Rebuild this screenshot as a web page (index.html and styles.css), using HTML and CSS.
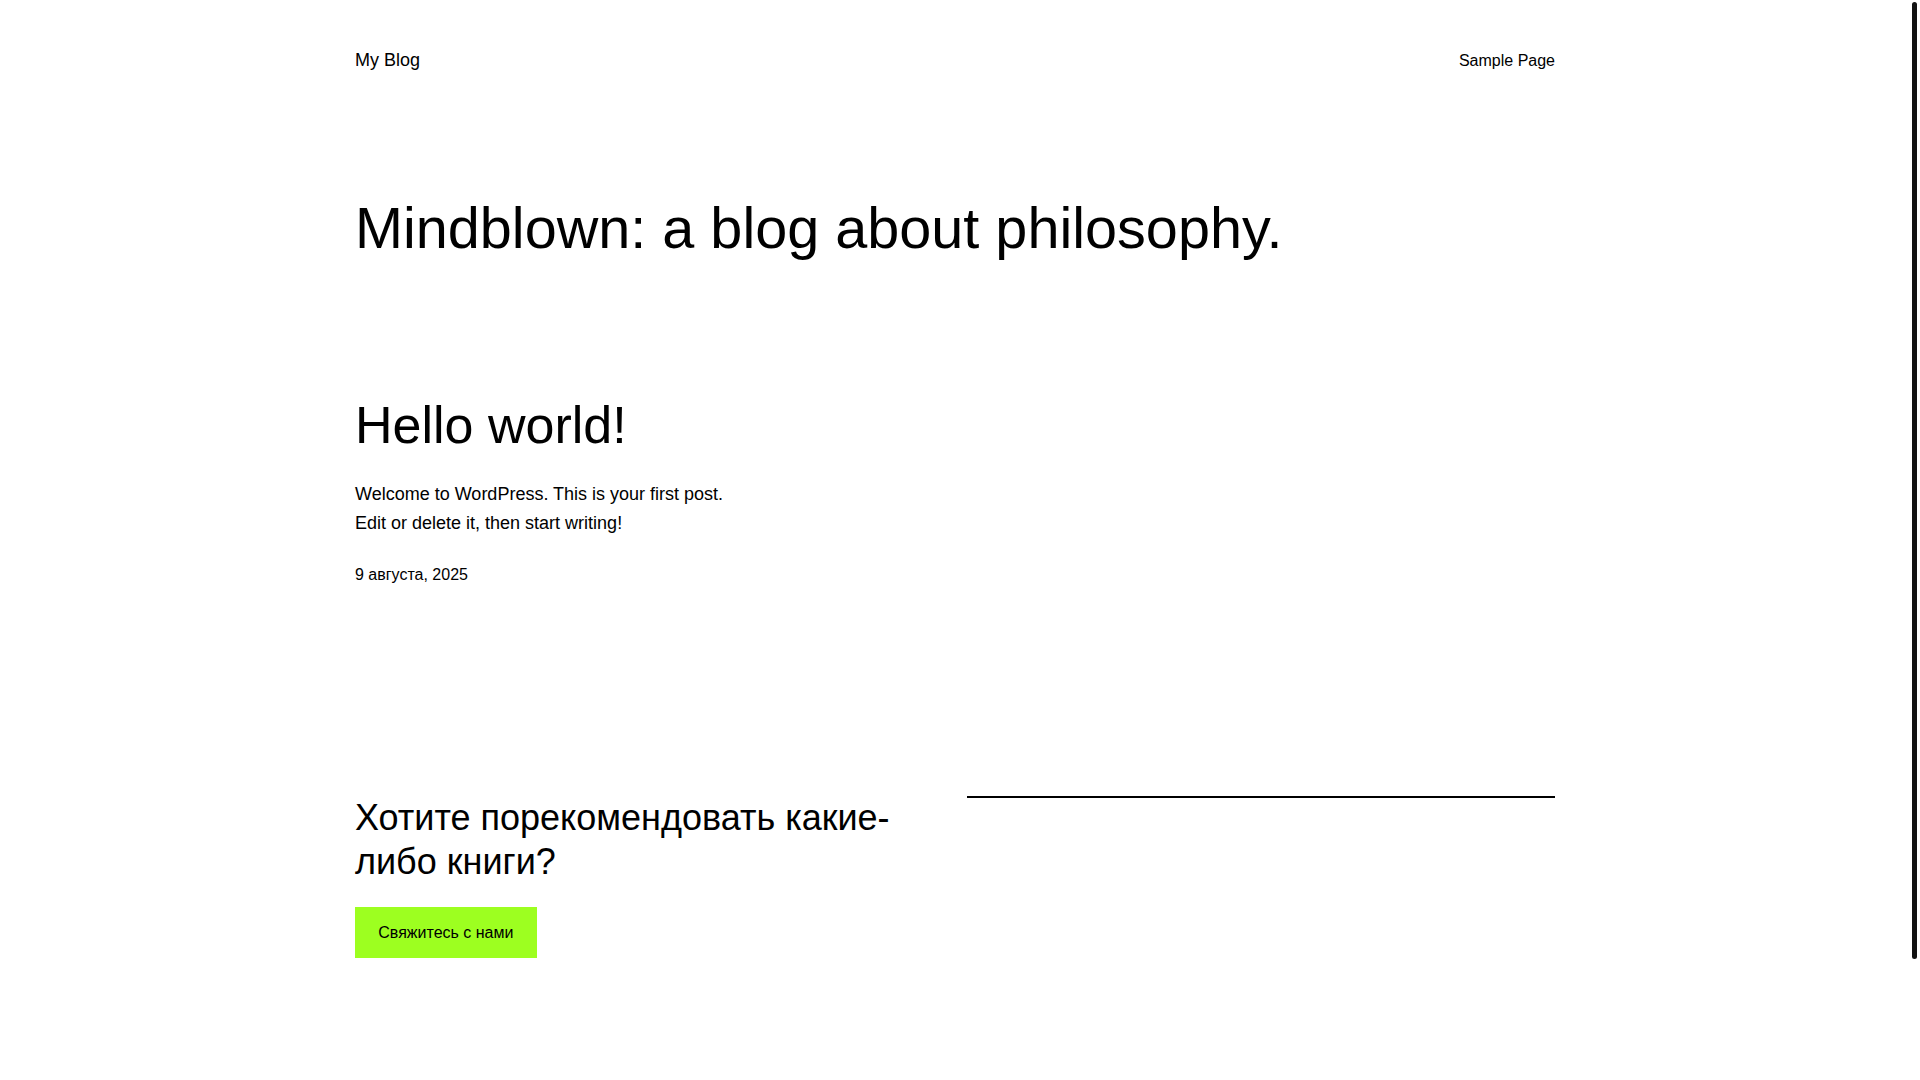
FILE: index.html
```html
<!DOCTYPE html>
<html lang="ru">
<head>
  <meta charset="UTF-8">
  <title>My Blog</title>
  <link rel="stylesheet" href="styles.css">
</head>
<body>

  <!-- шапка сайта -->
  <header class="site-header">
    <a class="site-title" href="#">My Blog</a>
    <nav class="site-nav">
      <a href="#">Sample Page</a>
    </nav>
  </header>

  <main class="site-main">
    <h1 class="tagline">Mindblown: a blog about philosophy.</h1>

    <!-- список записей -->
    <div class="post-grid">
      <article class="post">
        <h2 class="post-title"><a href="#">Hello world!</a></h2>
        <div class="post-excerpt">
          <p>Welcome to WordPress. This is your first post. Edit or delete it, then start writing!</p>
        </div>
        <div class="post-date">9 августа, 2025</div>
      </article>
    </div>

    <!-- призыв -->
    <section class="cta">
      <div class="cta-text">
        <h2>Хотите порекомендовать какие-либо книги?</h2>
        <a class="button" href="#">Свяжитесь с нами</a>
      </div>
      <div class="cta-side">
        <hr class="separator">
      </div>
    </section>
  </main>

  <!-- полоса прокрутки окна -->
  <div class="scrollbar"><div class="scrollbar-thumb"></div></div>

</body>
</html>
```

FILE: styles.css
```css
body {
  margin: 0;
  padding: 0 60px 0 50px;
  background-color: #fff;
  color: #000;
  font-family: "Liberation Sans", Arial, sans-serif;
  font-size: 18px;
  line-height: 1.6;
}

a {
  color: #000;
  text-decoration: none;
}

/* шапка */
.site-header {
  max-width: 1200px;
  margin: 0 auto;
  padding-top: 46px;
  display: flex;
  align-items: center;
  justify-content: space-between;
}

.site-title {
  font-size: 18px;
}

.site-nav a {
  font-size: 16px;
}

.site-main {
  max-width: 1200px;
  margin: 0 auto;
}

.tagline {
  margin: 119px 0 0 0;
  font-size: 57.6px;
  font-weight: normal;
  line-height: 1.2;
}

/* записи */
.post-grid {
  margin-top: 131px;
  display: grid;
  grid-template-columns: repeat(3, 1fr);
  gap: 24px;
}

.post-title {
  margin: 0;
  font-size: 52px;
  font-weight: normal;
  line-height: 1.2;
}

.post-excerpt {
  margin-top: 24px;
}

.post-excerpt p {
  margin: 0;
}

.post-date {
  margin-top: 24px;
  font-size: 16px;
}

/* призыв */
.cta {
  margin-top: 209px;
  display: grid;
  grid-template-columns: 1fr 1fr;
  gap: 24px;
}

.cta h2 {
  margin: 0;
  font-size: 36px;
  font-weight: normal;
  line-height: 1.2;
}

.button {
  display: inline-block;
  margin-top: 24px;
  padding: 12.7px 23.3px;
  background-color: #9dff20;
  color: #000;
  font-size: 16px;
}

.separator {
  margin: 0;
  border: none;
  border-top: 2px solid #000;
}

/* полоса прокрутки */
.scrollbar {
  position: fixed;
  top: 0;
  right: 0;
  width: 10px;
  height: 100%;
}

.scrollbar-thumb {
  margin: 2px 0 0 2px;
  width: 5px;
  height: 957px;
  border-radius: 3px;
  background-color: #121212;
}
```
